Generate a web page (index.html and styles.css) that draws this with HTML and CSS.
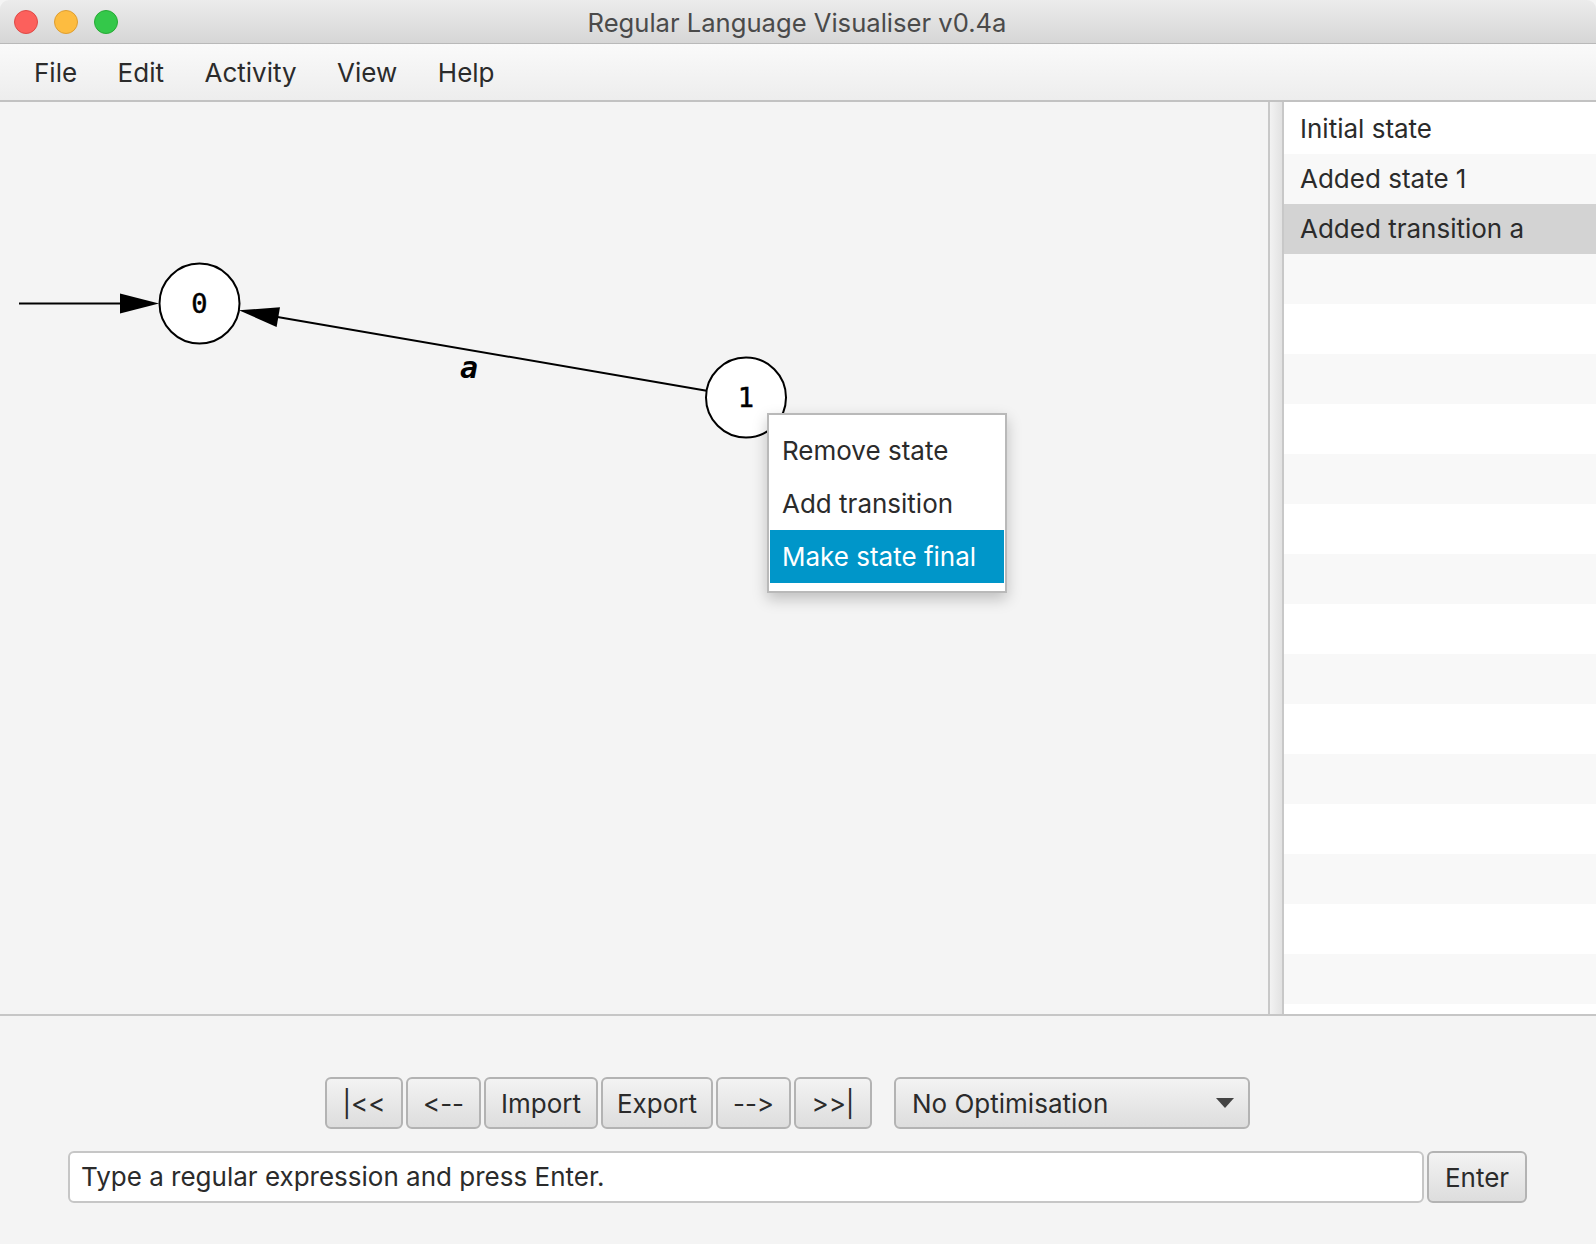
FILE: index.html
```html
<!DOCTYPE html>
<html lang="en">
<head>
<meta charset="utf-8">
<title>Regular Language Visualiser v0.4a</title>
<link rel="stylesheet" href="styles.css">
</head>
<body>
<div class="window">
  <div class="titlebar">
    <div class="lights">
      <span class="light red"></span>
      <span class="light yellow"></span>
      <span class="light green"></span>
    </div>
    <div class="title">Regular Language Visualiser v0.4a</div>
  </div>
  <div class="menubar">
    <span class="menu-item">File</span>
    <span class="menu-item">Edit</span>
    <span class="menu-item">Activity</span>
    <span class="menu-item">View</span>
    <span class="menu-item">Help</span>
  </div>
  <div class="main">
    <div class="canvas">
      <svg class="graph" width="1268" height="912" viewBox="0 0 1268 912">
        <line x1="19" y1="201.5" x2="122" y2="201.5" stroke="#000" stroke-width="2"/>
        <polygon points="120,191.5 159,201.5 120,211.5" fill="#000"/>
        <line x1="706.6" y1="288.7" x2="276" y2="214.7" stroke="#000" stroke-width="2"/>
        <polygon points="238.9,208.3 276.6,224.9 280.0,205.2" fill="#000"/>
        <circle cx="199.5" cy="201.5" r="40" fill="#fff" stroke="#000" stroke-width="2"/>
        <circle cx="746" cy="295.5" r="40" fill="#fff" stroke="#000" stroke-width="2"/>
        <text class="node-label" x="199.5" y="211" text-anchor="middle">0</text>
        <text class="node-label" x="746" y="305" text-anchor="middle">1</text>
        <text class="edge-label" x="460" y="276">a</text>
      </svg>
      <div class="context-menu">
        <div class="cm-item">Remove state</div>
        <div class="cm-item">Add transition</div>
        <div class="cm-item selected">Make state final</div>
      </div>
    </div>
    <div class="divider"></div>
    <div class="history">
      <div class="row">Initial state</div>
      <div class="row">Added state 1</div>
      <div class="row selected">Added transition a</div>
      <div class="row"></div>
      <div class="row"></div>
      <div class="row"></div>
      <div class="row"></div>
      <div class="row"></div>
      <div class="row"></div>
      <div class="row"></div>
      <div class="row"></div>
      <div class="row"></div>
      <div class="row"></div>
      <div class="row"></div>
      <div class="row"></div>
      <div class="row"></div>
      <div class="row"></div>
      <div class="row"></div>
      <div class="row"></div>
    </div>
  </div>
  <div class="bottom">
    <div class="controls">
      <div class="btn-group">
        <button class="btn w78">|&lt;&lt;</button>
        <button class="btn w75">&lt;--</button>
        <button class="btn w114">Import</button>
        <button class="btn w112">Export</button>
        <button class="btn w75">--&gt;</button>
        <button class="btn w78">&gt;&gt;|</button>
      </div>
      <div class="select">
        <span>No Optimisation</span>
        <span class="caret"></span>
      </div>
    </div>
    <div class="input-row">
      <div class="input">Type a regular expression and press Enter.</div>
      <button class="btn enter">Enter</button>
    </div>
  </div>
</div>
</body>
</html>
```

FILE: styles.css
```css
* { box-sizing: border-box; }
html, body {
  margin: 0;
  padding: 0;
  background: #f4f4f4;
}
body {
  font-family: "Inter", "Liberation Sans", sans-serif;
  font-feature-settings: "calt" 0;
  color: #333;
  width: 1596px;
  height: 1244px;
  overflow: hidden;
}
.window {
  display: flex;
  flex-direction: column;
  width: 1596px;
  height: 1244px;
}
.titlebar {
  height: 44px;
  flex: none;
  display: flex;
  align-items: center;
  justify-content: center;
  position: relative;
  background: linear-gradient(#ececec, #d6d6d6);
  border-bottom: 1px solid #b9b9b9;
  border-top-left-radius: 9px;
  border-top-right-radius: 9px;
}
.lights {
  position: absolute;
  left: 14px;
  top: 10px;
  display: flex;
  gap: 16px;
}
.light {
  width: 24px;
  height: 24px;
  border-radius: 50%;
  display: block;
}
.red { background: #fc605c; border: 1px solid #de4a46; }
.yellow { background: #fdbc40; border: 1px solid #de9e31; }
.green { background: #34c84a; border: 1px solid #27aa35; }
.title {
  font-size: 25.6px;
  color: #4a4a4a;
  margin-left: -2px;
  padding-top: 2px;
}
.menubar {
  height: 58px;
  flex: none;
  display: flex;
  align-items: center;
  gap: 40.5px;
  padding-left: 34px;
  padding-top: 1px;
  background: linear-gradient(#fafafa, #ededed);
  border-bottom: 2px solid #c2c2c2;
  font-size: 26px;
  color: #2b2b2b;
}
.main {
  height: 914px;
  flex: none;
  display: flex;
  border-bottom: 2px solid #c6c6c6;
}
.canvas {
  width: 1268px;
  height: 912px;
  position: relative;
  background: #f4f4f4;
  flex: none;
}
.graph { display: block; }
.node-label {
  font-family: "DejaVu Sans Mono", "Liberation Mono", monospace;
  font-size: 27px;
  fill: #000;
  stroke: #000;
  stroke-width: 0.5px;
}
.edge-label {
  font-family: "DejaVu Sans Mono", "Liberation Mono", monospace;
  font-size: 30px;
  font-style: italic;
  font-weight: bold;
  fill: #000;
}
.context-menu {
  position: absolute;
  left: 767px;
  top: 311px;
  width: 240px;
  height: 180px;
  background: #fff;
  border: 2px solid #b9b9b9;
  padding: 9px 1px 8px 1px;
  box-shadow: 0 6px 14px rgba(0, 0, 0, 0.22);
  font-size: 26px;
  color: #2b2b2b;
}
.cm-item {
  height: 53px;
  line-height: 53px;
  padding-left: 12px;
}
.cm-item.selected {
  background: #0096c9;
  color: #fff;
}
.divider {
  width: 16px;
  flex: none;
  border-left: 2px solid #c8c8c8;
  border-right: 2px solid #c8c8c8;
  background: linear-gradient(to right, #f2f2f2, #e2e2e2);
}
.history {
  flex: 1;
  background: #fff;
  overflow: hidden;
  padding-top: 2px;
  font-size: 26px;
  color: #2b2b2b;
}
.row {
  height: 50px;
  line-height: 50px;
  padding-left: 16px;
  background: #fff;
}
.row:nth-child(even) { background: #f8f8f8; }
.row.selected { background: #d3d3d3; }
.bottom {
  flex: 1;
  display: flex;
  flex-direction: column;
  padding-top: 61px;
  gap: 22px;
}
.controls {
  display: flex;
  align-items: center;
  padding-left: 325px;
  gap: 22px;
}
.btn-group {
  display: flex;
  gap: 3px;
}
.btn {
  height: 52px;
  font-family: "Inter", "Liberation Sans", sans-serif;
  font-feature-settings: "calt" 0;
  font-size: 26px;
  color: #2b2b2b;
  background: linear-gradient(#f3f3f3, #dddddd);
  border: 2px solid #b3b3b3;
  border-radius: 6px;
  padding: 0;
  margin: 0;
  text-align: center;
}
.w78 { width: 78px; }
.w75 { width: 75px; }
.w114 { width: 114px; }
.w112 { width: 112px; }
.select {
  width: 356px;
  height: 52px;
  display: flex;
  align-items: center;
  justify-content: space-between;
  padding: 0 14px 0 16px;
  background: linear-gradient(#f3f3f3, #dddddd);
  border: 2px solid #b3b3b3;
  border-radius: 6px;
  font-size: 26px;
  color: #2b2b2b;
}
.caret {
  width: 0;
  height: 0;
  border-left: 9px solid transparent;
  border-right: 9px solid transparent;
  border-top: 10px solid #444;
}
.input-row {
  display: flex;
  padding-left: 68px;
  gap: 3px;
}
.input {
  width: 1356px;
  height: 52px;
  background: #fff;
  border: 2px solid #c6c6c6;
  border-radius: 6px;
  padding-left: 11px;
  line-height: 48px;
  font-size: 26px;
  color: #2b2b2b;
}
.btn.enter { width: 100px; }
```
